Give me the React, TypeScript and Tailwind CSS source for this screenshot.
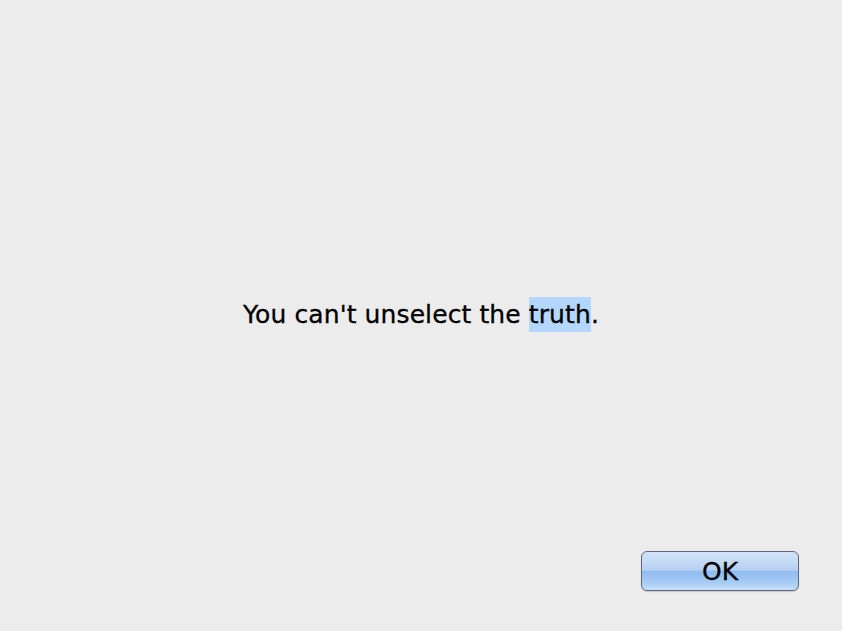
import React from 'react';

export default function App() {
  return (
    <div className="flex h-[631px] w-[842px] flex-col bg-[#ececec] font-['DejaVu_Sans',sans-serif] text-black">
      {/* Message */}
      <div className="flex flex-1 items-center justify-center pt-[78px]">
        <p className="text-[25px] leading-[34px] tracking-[0.1px] [-webkit-text-stroke:0.3px_black]">
          You can't unselect the <span className="bg-[#b3d7ff] py-[3px]">truth</span>.
        </p>
      </div>

      {/* Actions */}
      <div className="flex justify-end pb-[40px] pr-[43px]">
        <button className="relative h-[40px] w-[158px] overflow-hidden rounded-[6px] border border-[#62667c] bg-[linear-gradient(to_bottom,#d3e3f7_0%,#b7d1f3_48%,#8fbbef_50%,#a6cbf5_80%,#c4e0fb_100%)] text-[25px] leading-none shadow-[0_1px_1px_rgba(0,0,0,0.15)] [-webkit-text-stroke:0.3px_black]">
          OK
        </button>
      </div>
    </div>
  );
}
